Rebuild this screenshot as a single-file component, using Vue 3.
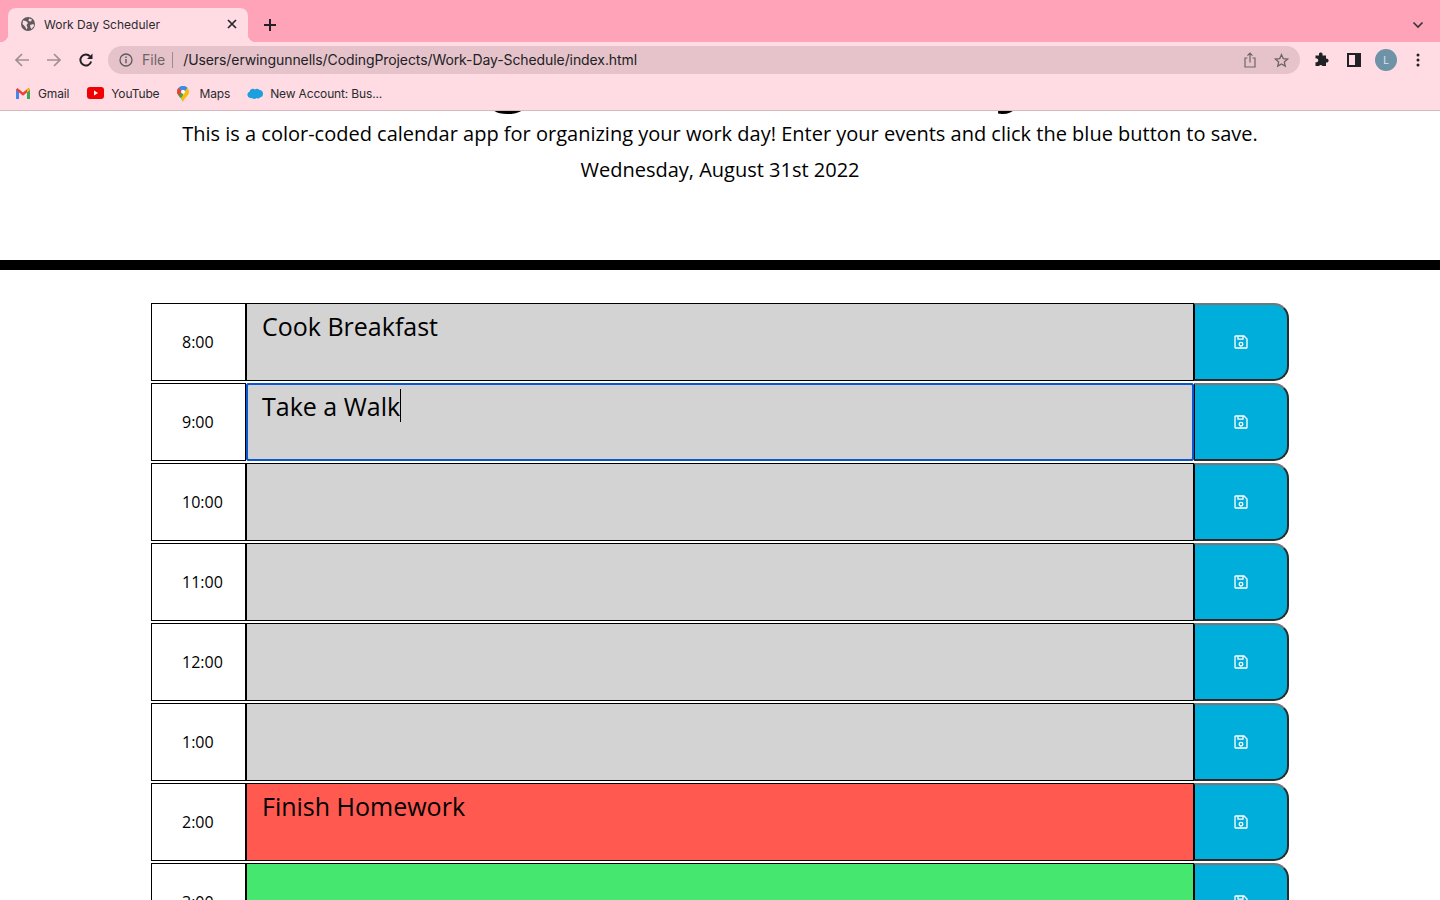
<template>
  <div class="window">
    <!-- browser chrome -->
    <div class="tabstrip">
      <div class="tab">
        <svg class="globe" width="16" height="16" viewBox="0 0 16 16">
          <circle cx="8" cy="8" r="7" fill="#5f5a5e" />
          <path d="M3 4.500l3 .5 2 2-1.500 2 1 2.500-1 2-1.500-3-2.500-2.500zM9 2.500l3 1-1 2-2.500-.5zM10 9l3.500-1 .5 2-2.500 3-1-1.500z" fill="#ffdce4" />
        </svg>
        <span class="tab-title">Work Day Scheduler</span>
        <svg class="tab-close" width="10" height="10" viewBox="0 0 10 10">
          <path d="M1 1l8 8M9 1l-8 8" stroke="#26262a" stroke-width="1.700" />
        </svg>
      </div>
      <svg class="new-tab" width="14" height="14" viewBox="0 0 14 14">
        <path d="M7 1v12M1 7h12" stroke="#202124" stroke-width="2" />
      </svg>
      <svg class="tab-menu" width="12" height="8" viewBox="0 0 12 8">
        <path d="M1.500 1.500L6 6l4.500-4.500" fill="none" stroke="#33333a" stroke-width="1.600" />
      </svg>
    </div>

    <div class="toolbar">
      <svg class="nav-icon" width="16" height="16" viewBox="0 0 16 16">
        <path d="M15 8H2M8 2L2 8l6 6" fill="none" stroke="#a08e94" stroke-width="1.700" />
      </svg>
      <svg class="nav-icon" width="16" height="16" viewBox="0 0 16 16">
        <path d="M1 8h13M8 2l6 6-6 6" fill="none" stroke="#a08e94" stroke-width="1.700" />
      </svg>
      <svg class="nav-icon" width="16" height="16" viewBox="0 0 16 16">
        <path d="M13.200 9.500A5.500 5.500 0 1 1 12 4.300" fill="none" stroke="#202124" stroke-width="1.900" />
        <path d="M14.500 1.500v5.500H9z" fill="#202124" />
      </svg>
      <div class="omnibox">
        <svg width="14" height="14" viewBox="0 0 14 14">
          <circle cx="7" cy="7" r="6" fill="none" stroke="#5f5a60" stroke-width="1.300" />
          <path d="M7 6v4.200M7 3.600v1.400" stroke="#5f5a60" stroke-width="1.400" />
        </svg>
        <span class="scheme">File</span>
        <span class="divider"></span>
        <span class="url">/Users/erwingunnells/CodingProjects/Work-Day-Schedule/index.html</span>
        <svg class="share" width="12" height="16" viewBox="0 0 12 16">
          <path d="M3.500 6H1v9h10V6H8.500M6 10.500V1.500M3.500 3.700L6 1.200l2.500 2.500" fill="none" stroke="#6e6468" stroke-width="1.200" />
        </svg>
        <svg class="star" width="15" height="15" viewBox="0 0 16 16">
          <path d="M8 1.800l1.900 4.200 4.500.5-3.400 3 1 4.500L8 11.700l-4 2.300 1-4.500-3.400-3 4.500-.5z" fill="none" stroke="#6e6468" stroke-width="1.400" />
        </svg>
      </div>
      <svg class="ext" width="16" height="16" viewBox="0 0 16 16">
        <path d="M6 1.500a2 2 0 0 1 3.500 0V3.500h3.500v3.200a2 2 0 1 1 0 3.800V14H9.500a2 2 0 0 0-3.500 0H2.500v-3.800a2 2 0 1 0 0-3.700V3.500H6z" fill="#202124" />
      </svg>
      <svg class="side" width="14" height="14" viewBox="0 0 14 14">
        <path d="M0 0h14v14H0z" fill="#202124" />
        <path d="M2 2h6v10H2z" fill="#ffdce4" />
      </svg>
      <span class="avatar">L</span>
      <svg class="dots" width="4" height="14" viewBox="0 0 4 14">
        <circle cx="2" cy="2" r="1.500" fill="#202124" />
        <circle cx="2" cy="7" r="1.500" fill="#202124" />
        <circle cx="2" cy="12" r="1.500" fill="#202124" />
      </svg>
    </div>

    <div class="bookmarks">
      <span class="bookmark">
        <svg width="16" height="12" viewBox="0 0 16 12">
          <path d="M1 12V2.500L2.500 1 8 5.500 13.500 1 15 2.500V12h-3V5.500L8 8.700 4 5.500V12z" fill="#ea4335" />
          <path d="M1 12V3l3 2.500V12z" fill="#4285f4" />
          <path d="M12 12V5.500L15 3v9z" fill="#34a853" />
          <path d="M13.500 1L15 2.500V3l-3 2.500V2.500z" fill="#fbbc04" />
        </svg>
        Gmail
      </span>
      <span class="bookmark">
        <svg width="17" height="12" viewBox="0 0 17 12">
          <rect width="17" height="12" rx="3" fill="#f00000" />
          <path d="M7 3.500L11 6 7 8.500z" fill="#fff" />
        </svg>
        YouTube
      </span>
      <span class="bookmark maps">
        <svg width="12" height="16" viewBox="0 0 12 16">
          <path d="M6 16C5 12 0 10 0 5.800A6 6 0 0 1 6 0c1.800 0 3.500.800 4.500 2L6 8z" fill="#34a853" />
          <path d="M1.500 2A6 6 0 0 1 6 0c1.800 0 3.500.800 4.500 2L6 6z" fill="#4285f4" />
          <path d="M0 5.800c0-1.500.500-2.800 1.500-3.800L6 6 2 9.500C.800 8.200 0 7.200 0 5.800z" fill="#ea4335" />
          <path d="M10.500 2c1 1 1.500 2.400 1.500 3.800C12 10 7 12 6 16c-.400-1.500-1.200-2.600-2-3.700z" fill="#fbbc04" />
          <circle cx="6" cy="5.800" r="2" fill="#fff" />
        </svg>
        Maps
      </span>
      <span class="bookmark">
        <svg width="16" height="12" viewBox="0 0 16 12">
          <path d="M3.500 11A3.200 3.200 0 0 1 2.500 4.800 3.500 3.500 0 0 1 8 2.500 3 3 0 0 1 12.500 3 3.800 3.800 0 0 1 13 10.500 2.700 2.700 0 0 1 9.500 11 3 3 0 0 1 5.500 11.200 2.500 2.500 0 0 1 3.500 11z" fill="#1b9fde" />
        </svg>
        New Account: Bus...
      </span>
    </div>

    <!-- scrolled page -->
    <div class="page">
      <header class="jumbotron">
        <h1>Organize Your Day</h1>
        <p class="lead">This is a color-coded calendar app for organizing your work day! Enter your events and click the blue button to save.</p>
        <p class="lead date">Wednesday, August 31st 2022</p>
      </header>

      <div class="container">
        <div v-for="slot in slots" :key="slot.hour" class="row">
          <div class="hour">{{ slot.hour }}</div>
          <div class="event" :class="[slot.state, { focused: slot.focused }]">
            {{ slot.text }}<span v-if="slot.focused" class="caret"></span>
          </div>
          <button class="save" type="button">
            <svg width="14" height="14" viewBox="0 0 14 14">
              <path d="M1.500 1h8.500l3 3v8.500a.5.5 0 0 1-.5.5h-11a.5.5 0 0 1-.5-.5v-11a.5.5 0 0 1 .5-.5z" fill="none" stroke="#fff" stroke-width="1.300" />
              <path d="M4 1v3.200h5V1" fill="none" stroke="#fff" stroke-width="1.300" />
              <circle cx="7" cy="9.200" r="1.800" fill="none" stroke="#fff" stroke-width="1.300" />
            </svg>
          </button>
        </div>
      </div>
    </div>
  </div>
</template>

<script setup>
const slots = [
  { hour: '8:00', text: 'Cook Breakfast', state: 'past' },
  { hour: '9:00', text: 'Take a Walk', state: 'past', focused: true },
  { hour: '10:00', text: '', state: 'past' },
  { hour: '11:00', text: '', state: 'past' },
  { hour: '12:00', text: '', state: 'past' },
  { hour: '1:00', text: '', state: 'past' },
  { hour: '2:00', text: 'Finish Homework', state: 'present' },
  { hour: '3:00', text: '', state: 'future' },
]
</script>

<style>
html,
body {
  overflow: hidden;
}
</style>

<style scoped>
.window {
  height: 900px;
  display: flex;
  flex-direction: column;
  overflow: hidden;
  background: #fff;
  font-family: 'Open Sans', sans-serif;
}

/* tab strip */
.tabstrip {
  height: 42px;
  flex: none;
  display: flex;
  align-items: flex-end;
  background: #ffa3b8;
  padding-left: 8px;
}

.tab {
  position: relative;
  width: 240px;
  height: 34px;
  display: flex;
  align-items: center;
  padding: 0 11px 2px 12px;
  box-sizing: border-box;
  background: #ffdce4;
  border-radius: 8px 8px 0 0;
}

/* flared bottom corners of the active tab */
.tab::before,
.tab::after {
  content: '';
  position: absolute;
  bottom: 0;
  width: 8px;
  height: 8px;
}

.tab::before {
  left: -8px;
  background: radial-gradient(circle at 0 0, transparent 8px, #ffdce4 8.5px);
}

.tab::after {
  right: -8px;
  background: radial-gradient(circle at 100% 0, transparent 8px, #ffdce4 8.5px);
}

.tab-title {
  flex: 1;
  margin-left: 8px;
  font: 12px Inter, 'Liberation Sans', sans-serif;
  color: #2a2a2e;
}

.new-tab {
  margin: 0 0 10px 15px;
}

.tab-menu {
  margin: 0 16px 13px auto;
}

/* toolbar */
.toolbar {
  height: 36px;
  flex: none;
  display: flex;
  align-items: center;
  padding: 0 0 0 14px;
  background: #ffdce4;
  box-sizing: border-box;
}

.nav-icon {
  margin-right: 16px;
}

.nav-icon:nth-child(3) {
  margin-right: 14px;
}

.omnibox {
  width: 1192px;
  height: 28px;
  display: flex;
  align-items: center;
  padding: 0 11px;
  box-sizing: border-box;
  background: #e6c3ca;
  border-radius: 14px;
  font: 14px Inter, 'Liberation Sans', sans-serif;
  color: #202124;
}

.scheme {
  margin: 0 0 2px 9px;
  color: #6e6468;
}

.divider {
  width: 1px;
  height: 16px;
  margin: 0 10px 0 7px;
  background: #9c8c90;
}

.url {
  flex: 1;
  margin-bottom: 2px;
  letter-spacing: -0.09px;
}

.share {
  margin-right: 18px;
}

.ext {
  margin-left: 13px;
}

.side {
  margin-left: 18px;
}

.avatar {
  width: 22px;
  height: 22px;
  margin-left: 14px;
  border-radius: 50%;
  background: #6e93a7;
  color: #dce8ee;
  font: 10px/22px Inter, sans-serif;
  text-align: center;
}

.dots {
  margin-left: 19px;
}

/* bookmarks bar */
.bookmarks {
  height: 33px;
  flex: none;
  display: flex;
  align-items: center;
  padding: 0 0 2px 15px;
  box-sizing: border-box;
  background: #ffdce4;
  border-bottom: 1px solid #d8b8c0;
  font: 12px Inter, 'Liberation Sans', sans-serif;
  letter-spacing: -0.15px;
  color: #2a2a2e;
}

.bookmark {
  display: flex;
  align-items: center;
  gap: 7px;
  margin-right: 18px;
}

.maps {
  gap: 10px;
  margin-right: 17px;
}

.maps svg {
  margin-top: 2px;
}

/* page */
.page {
  flex: 1;
  min-height: 0;
  overflow: hidden;
}

.jumbotron {
  display: flow-root;
  height: 159px;
  box-sizing: border-box;
  text-align: center;
  color: #000;
  border-bottom: 10px solid #000;
}

h1 {
  margin: -88px 0 0;
  font-size: 68px;
  font-weight: 700;
  line-height: 97px;
}

.lead {
  margin: 0;
  font-size: 20px;
  line-height: 27px;
}

.date {
  margin-top: 9px;
}

.container {
  width: 1138px;
  margin: 33px auto 0;
}

.row {
  display: flex;
  height: 78px;
  margin-bottom: 2px;
}

.hour {
  width: 95px;
  flex: none;
  display: flex;
  align-items: center;
  padding-left: 30px;
  box-sizing: border-box;
  border: 1px solid #000;
  font-size: 16px;
  color: #000;
}

.event {
  flex: 1;
  padding: 5px 15px;
  box-sizing: border-box;
  border: 1px solid #000;
  font-size: 25px;
  line-height: 34px;
  color: #000;
}

.past {
  background: #d3d3d3;
}

.present {
  background: #ff5950;
}

.future {
  background: #45e76f;
}

.focused {
  border-radius: 3px;
  outline: 2px solid #0b57d0;
  outline-offset: -2px;
}

.caret {
  display: inline-block;
  width: 1px;
  height: 33px;
  background: #000;
  vertical-align: top;
}

.save {
  width: 95px;
  flex: none;
  padding: 0;
  display: flex;
  align-items: center;
  justify-content: center;
  background: #00aedc;
  border: 2px solid #000;
  border-color: #767676 #2a2a2a #2a2a2a #000;
  border-left-width: 1px;
  border-radius: 0 15px 15px 0;
}
</style>
